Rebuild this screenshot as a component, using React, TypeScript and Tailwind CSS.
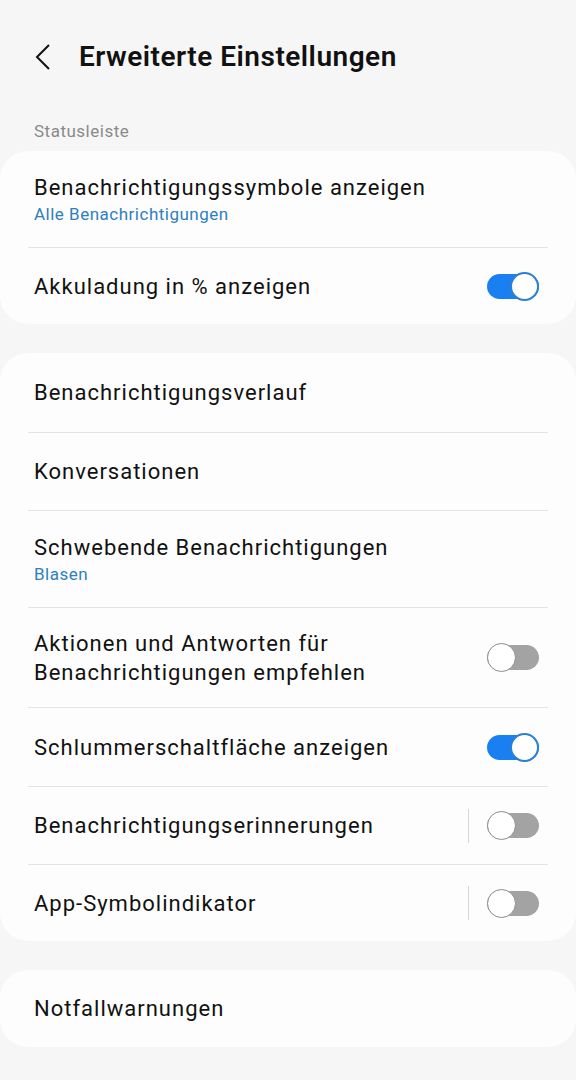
type Row = {
  title: string;
  sub?: string;
  toggle?: 'on' | 'off';
  bar?: boolean;
  h: string;
};

function Toggle({ on }: { on: boolean }) {
  return (
    <div className="relative w-[52px] h-[29px] flex items-center">
      <div className={`w-full h-[25px] rounded-full ${on ? 'bg-[#1a80f2]' : 'bg-[#a3a3a3]'}`} />
      <div
        className={`absolute top-0 w-[29px] h-[29px] rounded-full bg-white ${
          on ? 'right-0 border-2 border-[#2a7fd8]' : 'left-0 border-[1.5px] border-[#8c8c8c]'
        }`}
      />
    </div>
  );
}

function Card({ rows }: { rows: Row[] }) {
  return (
    <div className="bg-[#fdfdfd] rounded-[28px]">
      {rows.map((row, i) => (
        <div key={row.title}>
          {i > 0 && <div className="mx-[28px] h-px bg-[#e4e4e4]" />}
          <div className={`flex items-center pl-[34px] pr-[37px] ${row.h}`}>
            <div className="flex-1">
              <div className="text-[22px] leading-[29px] tracking-[1px] text-[#111]">{row.title}</div>
              {row.sub && (
                <div className="text-[17px] leading-[24px] tracking-[0.5px] text-[#2e7fbf]">{row.sub}</div>
              )}
            </div>
            {row.bar && <div className="w-px h-[34px] bg-[#d6d6d6] mr-[18px]" />}
            {row.toggle && <Toggle on={row.toggle === 'on'} />}
          </div>
        </div>
      ))}
    </div>
  );
}

export default function App() {
  return (
    <div className="min-h-[1080px] bg-[#f6f6f6] font-['Roboto','Noto_Sans',sans-serif]">
      {/* Kopfzeile */}
      <div className="h-[114px] flex items-center">
        <svg className="ml-[34px] w-[18px] h-[28px]" viewBox="0 0 18 28" fill="none">
          <polyline points="15,2 3,14 15,26" stroke="#111" strokeWidth="2" strokeLinejoin="miter" />
        </svg>
        <h1 className="ml-[27px] text-[28px] font-semibold text-[#111] tracking-[0.5px]">Erweiterte Einstellungen</h1>
      </div>

      <div className="mt-[7px] mb-[10px] pl-[34px] text-[17px] leading-[20px] tracking-[0.5px] text-[#8a8a8a]">
        Statusleiste
      </div>

      <div className="flex flex-col gap-[29px]">
        <Card
          rows={[
            { title: 'Benachrichtigungssymbole anzeigen', sub: 'Alle Benachrichtigungen', h: 'h-[96px]' },
            { title: 'Akkuladung in % anzeigen', toggle: 'on', h: 'h-[76px]' },
          ]}
        />
        <Card
          rows={[
            { title: 'Benachrichtigungsverlauf', h: 'h-[79px]' },
            { title: 'Konversationen', h: 'h-[77px]' },
            { title: 'Schwebende Benachrichtigungen', sub: 'Blasen', h: 'h-[96px]' },
            {
              title: 'Aktionen und Antworten für Benachrichtigungen empfehlen',
              toggle: 'off',
              h: 'h-[99px]',
            },
            { title: 'Schlummerschaltfläche anzeigen', toggle: 'on', h: 'h-[78px]' },
            { title: 'Benachrichtigungserinnerungen', toggle: 'off', bar: true, h: 'h-[77px]' },
            { title: 'App-Symbolindikator', toggle: 'off', bar: true, h: 'h-[76px]' },
          ]}
        />
        <Card rows={[{ title: 'Notfallwarnungen', h: 'h-[77px]' }]} />
      </div>
    </div>
  );
}
